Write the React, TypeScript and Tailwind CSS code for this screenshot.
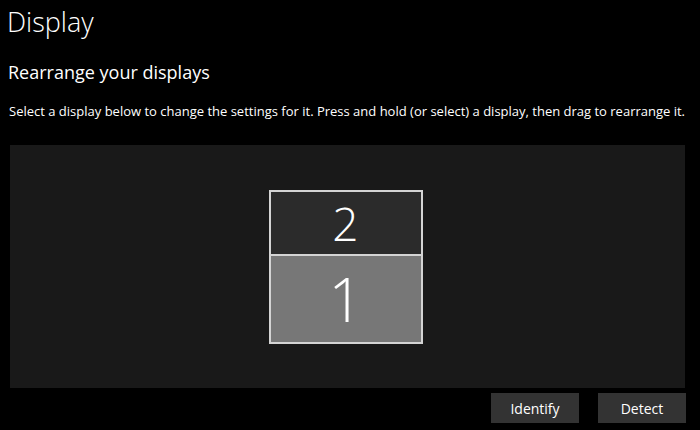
export default function App() {
  return (
    <div className="w-[700px] h-[430px] bg-black text-white overflow-hidden" style={{ fontFamily: '"Open Sans", "Noto Sans", sans-serif' }}>
      <div className="pl-[7px] pt-[4px] text-[27px] font-light leading-[36px]">Display</div>
      <div className="pl-[8px] pt-[20px] text-[18px] leading-[24px]">Rearrange your displays</div>
      <div className="pl-[9px] pt-[18px] text-[13px] leading-[18px]">Select a display below to change the settings for it. Press and hold (or select) a display, then drag to rearrange it.</div>
      <div className="ml-[10px] mt-[25px] w-[675px] h-[243px] bg-[#191919] flex flex-col items-center pt-[45px] pr-[4px]">
        <div className="w-[154px] h-[66px] bg-[#2b2b2b] border-2 border-[#d4d4d4] flex items-center justify-center text-[46px] font-light leading-none">2</div>
        <div className="w-[154px] h-[88px] bg-[#777777] border-2 border-t-0 border-[#d4d4d4] flex items-center justify-center text-[60px] font-light leading-none">1</div>
      </div>
      <div className="flex justify-end gap-[19px] pr-[14px] mt-[5px]">
        <button className="w-[88px] h-[30px] bg-[#333333] text-[14px] text-white">Identify</button>
        <button className="w-[88px] h-[30px] bg-[#333333] text-[14px] text-white">Detect</button>
      </div>
    </div>
  );
}
